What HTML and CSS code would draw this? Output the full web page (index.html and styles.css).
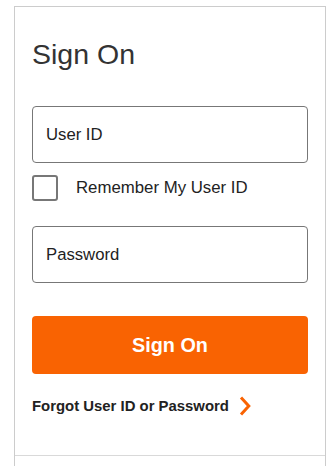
FILE: index.html
```html
<!DOCTYPE html>
<html lang="en">
<head>
<meta charset="utf-8">
<title>Sign On</title>
<link rel="stylesheet" href="styles.css">
</head>
<body>
<div class="card">
  <div class="card-body">
    <h1 class="title">Sign On</h1>
    <div class="field">User ID</div>
    <label class="remember">
      <span class="checkbox"></span>
      <span class="remember-text">Remember My User ID</span>
    </label>
    <div class="field field-password">Password</div>
    <button class="btn">Sign On</button>
    <a class="forgot" href="#">
      <span>Forgot User ID or Password</span>
      <svg class="chev" width="12" height="20" viewBox="0 0 12 20"><path d="M2 1.5 L9.8 10 L2 18.5" fill="none" stroke="#f96302" stroke-width="3"/></svg>
    </a>
  </div>
  <div class="card-footer"></div>
</div>
</body>
</html>
```
FILE: styles.css
```css
html, body {
  margin: 0;
  padding: 0;
  background: #fff;
  font-family: "Liberation Sans", Arial, sans-serif;
  color: #222;
}
body {
  padding: 6px 10px 0 14px;
  height: 466px;
  box-sizing: border-box;
  overflow: hidden;
}
.card {
  width: 312px;
  box-sizing: border-box;
  border: 1px solid #cccccc;
  border-bottom: none;
  height: 460px;
}
.card-body {
  padding: 31px 17px 0 17px;
  height: 448px;
  box-sizing: border-box;
}
.title {
  margin: 0;
  font-size: 28.5px;
  line-height: 32px;
  font-weight: normal;
  color: #333;
}
.field {
  margin-top: 36px;
  height: 57px;
  box-sizing: border-box;
  border: 1px solid #777;
  border-radius: 4px;
  padding-left: 13px;
  display: flex;
  align-items: center;
  font-size: 16.7px;
  color: #222;
}
.remember {
  margin-top: 12px;
  display: flex;
  align-items: center;
  gap: 18px;
}
.checkbox {
  width: 26px;
  height: 26px;
  box-sizing: border-box;
  border: 2px solid #777;
  border-radius: 3px;
  flex: none;
}
.remember-text {
  font-size: 16.8px;
  color: #222;
}
.field-password {
  margin-top: 25px;
}
.btn {
  display: block;
  width: 100%;
  margin-top: 33px;
  height: 58px;
  border: none;
  border-radius: 4px;
  background: #f96302;
  color: #fff;
  font-family: "Liberation Sans", Arial, sans-serif;
  font-weight: bold;
  font-size: 19.8px;
  padding: 0;
}
.forgot {
  margin-top: 22px;
  display: flex;
  align-items: center;
  gap: 10px;
  text-decoration: none;
  color: #222;
  font-weight: bold;
  font-size: 14.9px;
  line-height: 20px;
}
.chev {
  display: block;
}
.card-footer {
  border-top: 1px solid #d9d9d9;
  height: 10px;
}
```
